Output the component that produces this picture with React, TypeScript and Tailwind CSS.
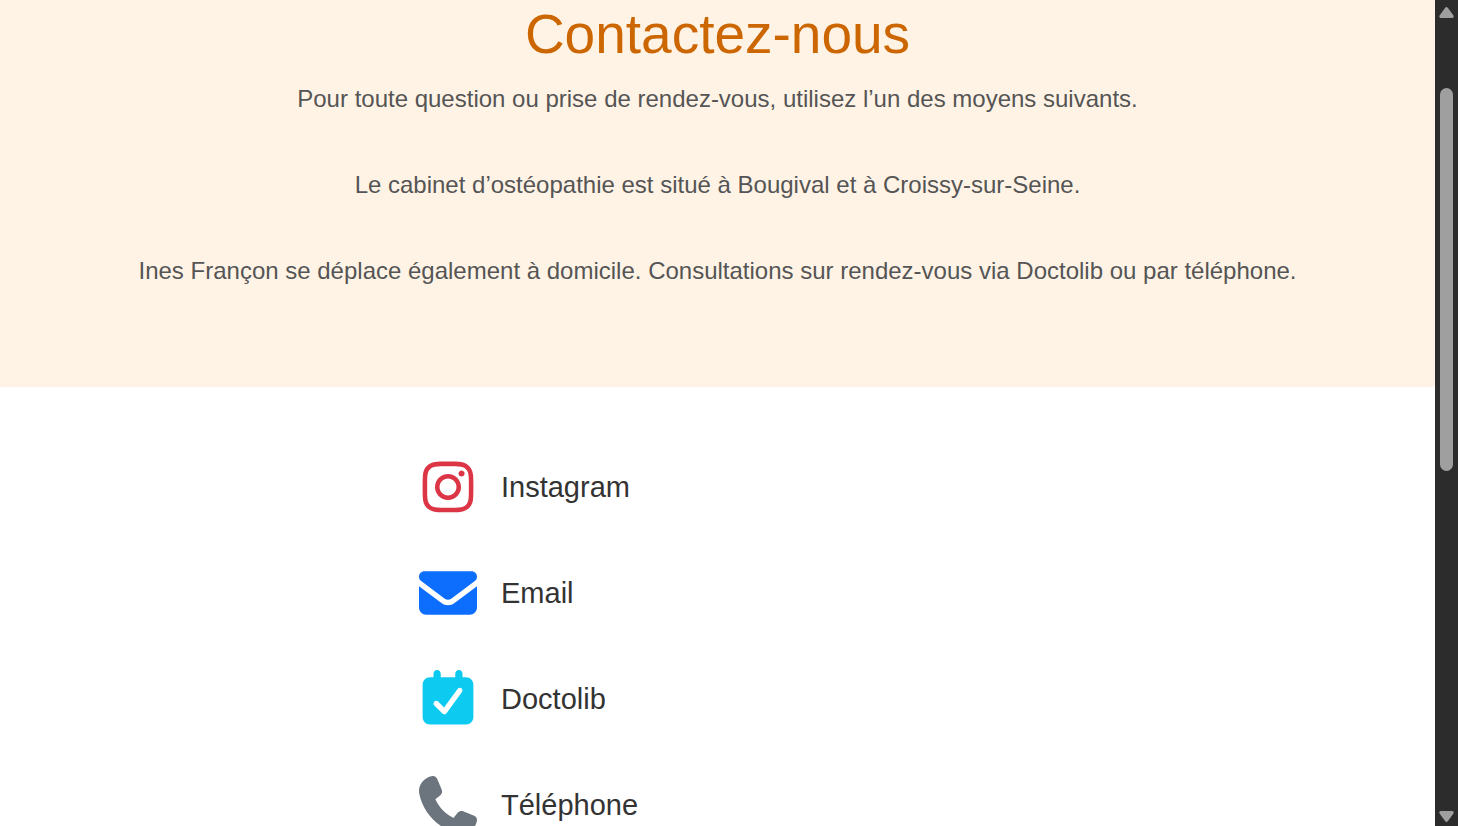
import type { ReactNode } from 'react'
import { FaInstagram } from 'react-icons/fa6'

type Contact = {
  label: string
  href: string
  color: string
  icon: ReactNode
}

const contacts: Contact[] = [
  {
    label: 'Instagram',
    href: '#instagram',
    color: 'text-[#dc3545]',
    icon: <FaInstagram className="size-[58px]" />,
  },
  {
    label: 'Email',
    href: '#email',
    color: 'text-[#0d6efd]',
    icon: (
      <Glyph viewBox="0 0 512 512">
        <path d="M48 64c-26.5 0-48 21.5-48 48 0 15.1 7.1 29.3 19.2 38.4l208 156c17.1 12.8 40.5 12.8 57.6 0l208-156c12.1-9.1 19.2-23.3 19.2-38.4 0-26.5-21.5-48-48-48L48 64zM0 196L0 384c0 35.3 28.7 64 64 64l384 0c35.3 0 64-28.7 64-64l0-188-198.4 148.8c-34.1 25.6-81.1 25.6-115.2 0L0 196z" />
      </Glyph>
    ),
  },
  {
    label: 'Doctolib',
    href: '#doctolib',
    color: 'text-[#0dcaf0]',
    icon: (
      <Glyph viewBox="0 0 448 512">
        <path d="M320 0c17.7 0 32 14.3 32 32l0 32 32 0c35.3 0 64 28.7 64 64l0 288c0 35.3-28.7 64-64 64L64 480c-35.3 0-64-28.7-64-64L0 128C0 92.7 28.7 64 64 64l32 0 0-32c0-17.7 14.3-32 32-32s32 14.3 32 32l0 32 128 0 0-32c0-17.7 14.3-32 32-32zm22 161.7c-10.7-7.8-25.7-5.4-33.5 5.3L189.1 331.2 137 279.1c-9.4-9.4-24.6-9.4-33.9 0s-9.4 24.6 0 33.9l72 72c5 5 11.9 7.5 18.8 7s13.4-4.1 17.5-9.8L347.3 195.2c7.8-10.7 5.4-25.7-5.3-33.5z" />
      </Glyph>
    ),
  },
  {
    label: 'Téléphone',
    href: '#telephone',
    color: 'text-[#6c757d]',
    icon: (
      <Glyph viewBox="0 0 512 512">
        <path d="M160.2 25C152.3 6.1 131.7-3.9 112.1 1.4l-5.5 1.5c-64.6 17.6-119.8 80.2-103.7 156.4 37.1 175 174.8 312.7 349.8 349.8 76.3 16.2 138.8-39.1 156.4-103.7l1.5-5.5c5.4-19.7-4.7-40.3-23.5-48.1l-97.3-40.5c-16.5-6.9-35.6-2.1-47 11.8l-38.6 47.2C233.9 335.4 177.3 277 144.8 205.3L189 169.3c13.9-11.3 18.6-30.4 11.8-47L160.2 25z" />
      </Glyph>
    ),
  },
]

function Glyph({ viewBox, children }: { viewBox: string; children: ReactNode }) {
  return (
    <svg viewBox={viewBox} fill="currentColor" aria-hidden="true" className="size-[58px]">
      {children}
    </svg>
  )
}

function ContactLink({ label, href, color, icon }: Contact) {
  return (
    <li>
      <a href={href} className="flex items-center gap-6">
        <span className={color}>{icon}</span>
        <span className="text-[29px] leading-10 text-[#333333]">{label}</span>
      </a>
    </li>
  )
}

function ScrollRail() {
  return (
    <div aria-hidden="true" className="flex w-[23px] shrink-0 flex-col items-center bg-[#2c2c2c] pt-[7px] pb-1 text-[#9f9f9f]">
      <svg viewBox="0 0 15 11" fill="currentColor" className="h-[11px] w-[15px]">
        <path d="M6.2.7Q7.5-.7 8.8.7L14.3 8.3Q15.4 11 13 11H2Q-.4 11 .7 8.3Z" />
      </svg>
      <div className="flex w-full flex-1 flex-col items-center pt-[70px]">
        <div className="h-[53%] w-[13px] rounded-full bg-[#9f9f9f]" />
      </div>
      <svg viewBox="0 0 15 11" fill="currentColor" className="h-[11px] w-[15px]">
        <path d="M6.2 10.3Q7.5 11.7 8.8 10.3L14.3 2.7Q15.4 0 13 0H2Q-.4 0 .7 2.7Z" />
      </svg>
    </div>
  )
}

export default function App() {
  return (
    <div className="flex h-screen overflow-hidden bg-white font-['Liberation_Sans',Arial,sans-serif]">
      <main className="min-w-0 flex-1 overflow-hidden">
        <header className="bg-[#fff3e6] pb-[98px] text-center">
          <h1 className="text-[55px] leading-[68px] text-[#cc6600]">Contactez-nous</h1>
          <div className="flex flex-col gap-[50px] pt-[13px] text-2xl leading-9 text-[#555555]">
            <p>Pour toute question ou prise de rendez-vous, utilisez l’un des moyens suivants.</p>
            <p>Le cabinet d’ostéopathie est situé à Bougival et à Croissy-sur-Seine.</p>
            <p>Ines Françon se déplace également à domicile. Consultations sur rendez-vous via Doctolib ou par téléphone.</p>
          </div>
        </header>
        <ul className="mx-auto flex max-w-[597px] flex-col gap-12 py-[71px]">
          {contacts.map((contact) => (
            <ContactLink key={contact.label} {...contact} />
          ))}
        </ul>
      </main>
      <ScrollRail />
    </div>
  )
}
